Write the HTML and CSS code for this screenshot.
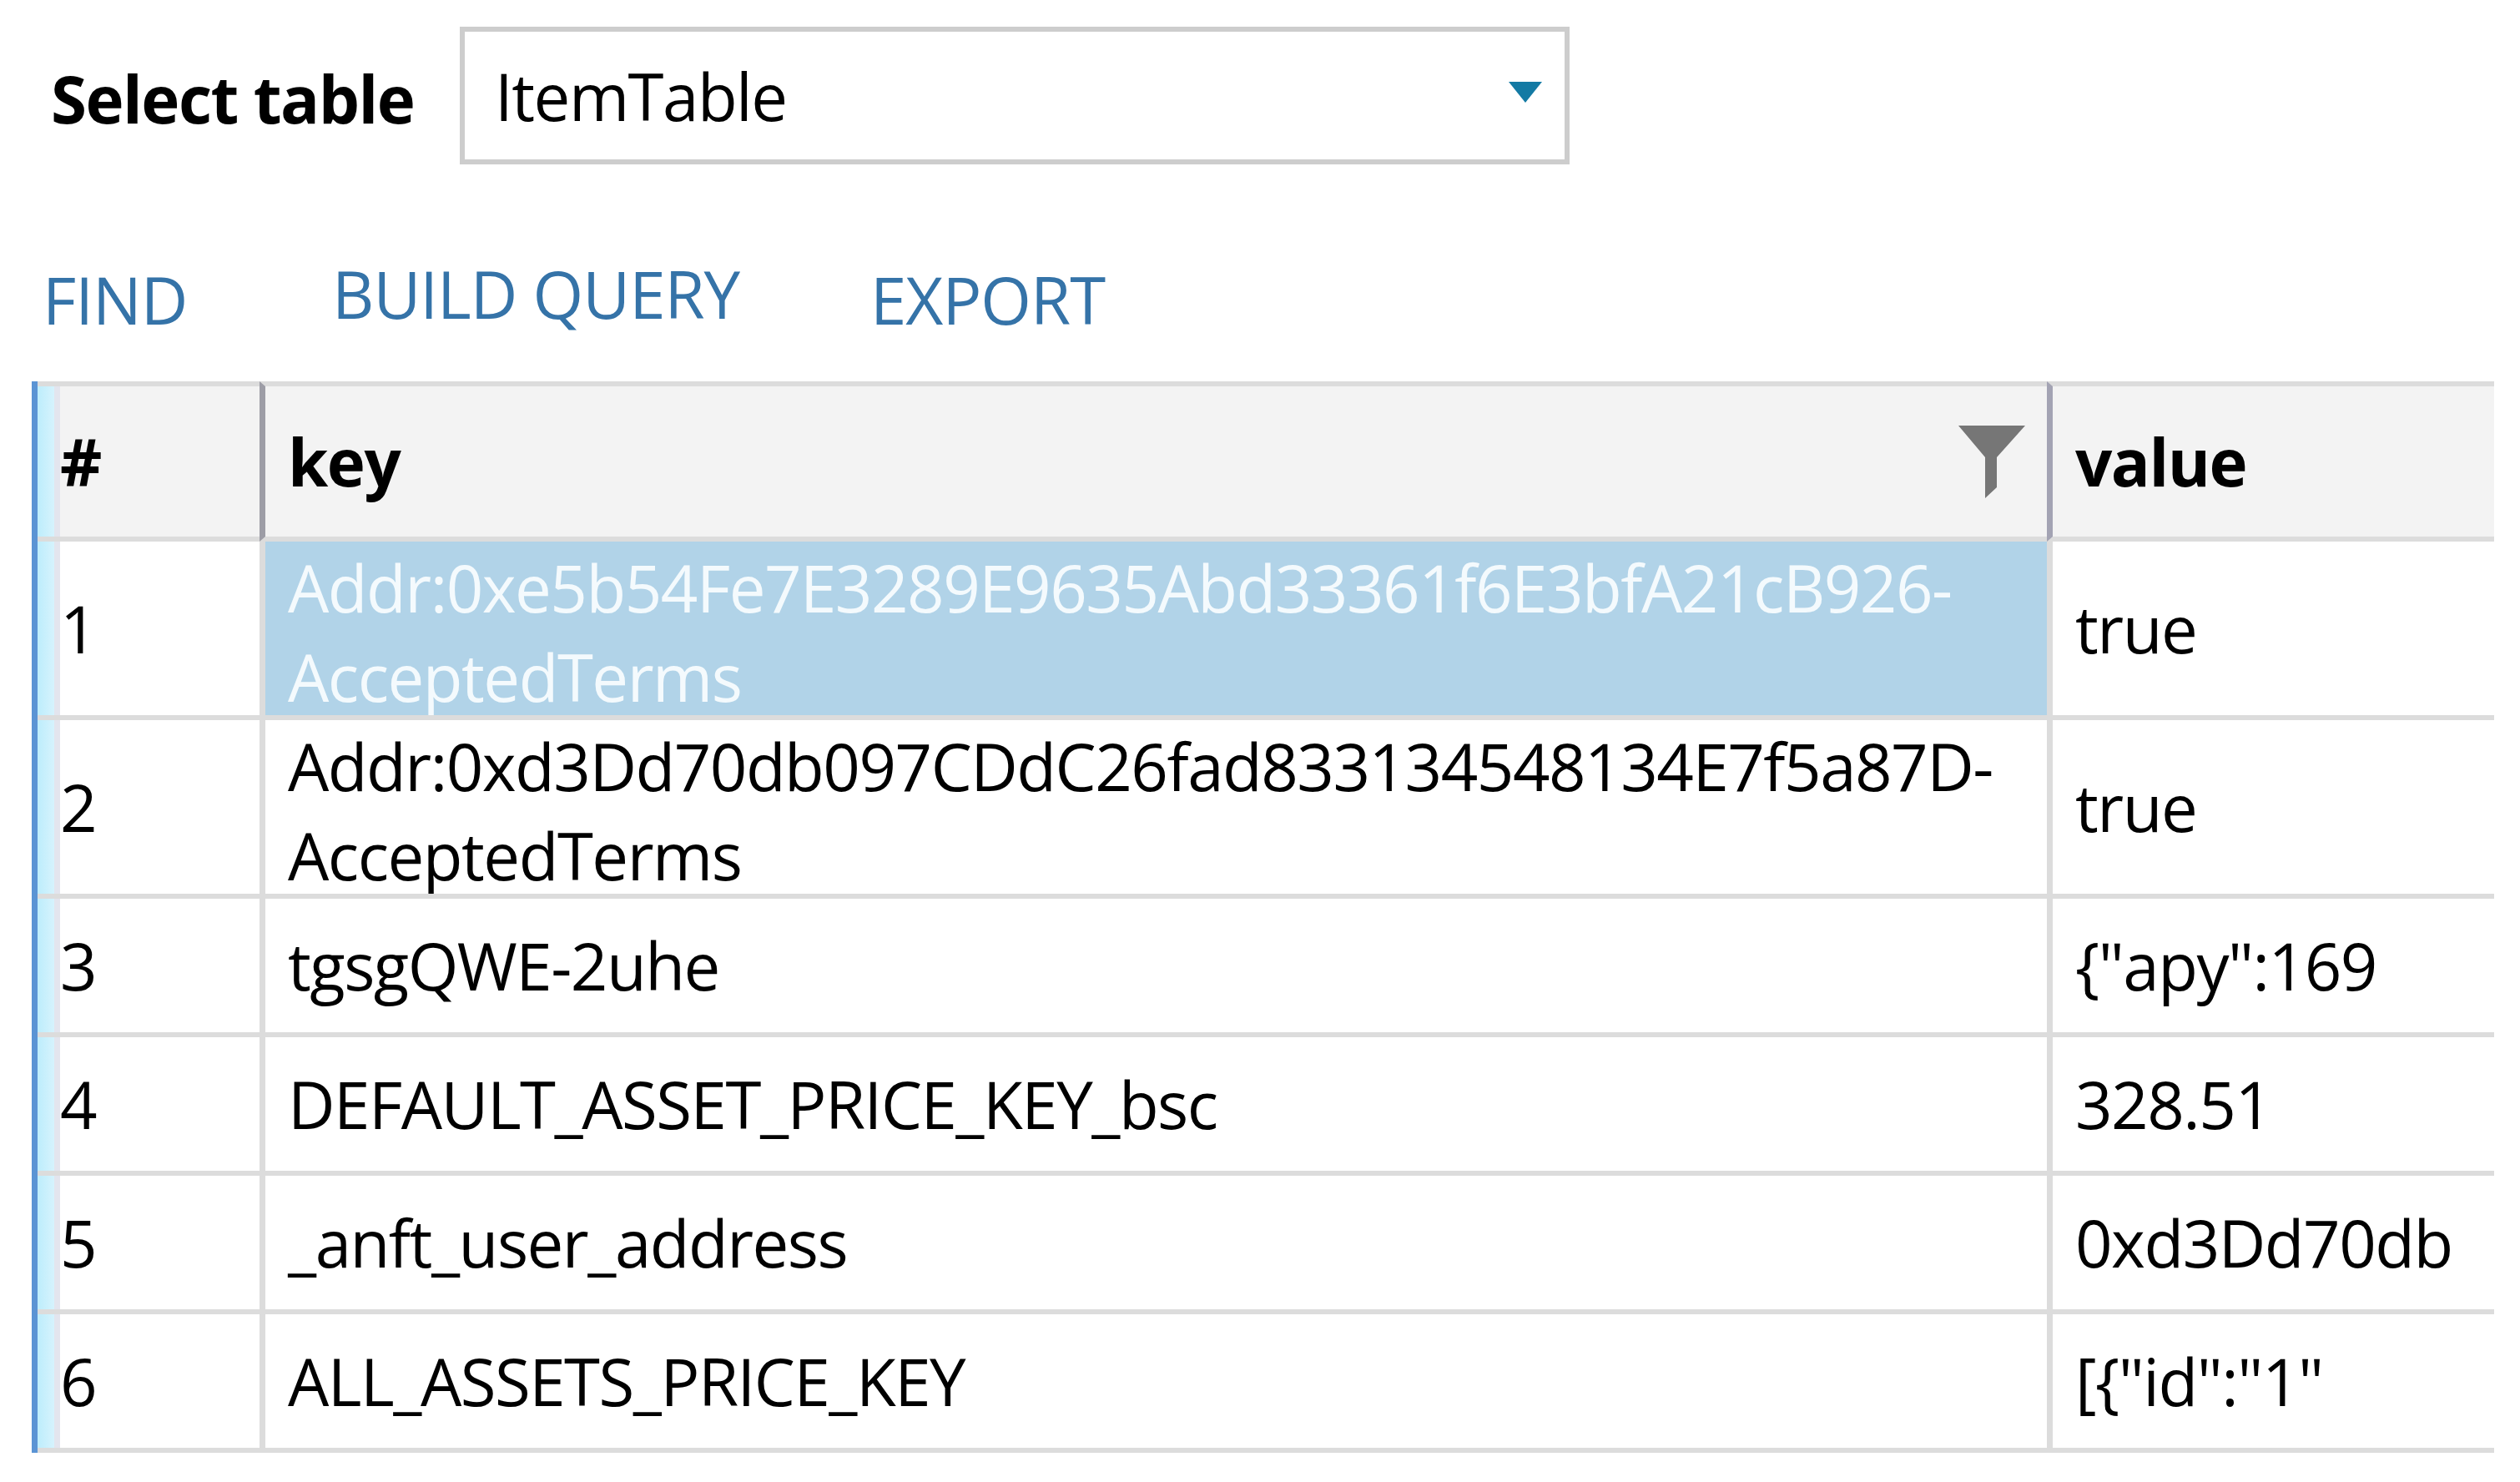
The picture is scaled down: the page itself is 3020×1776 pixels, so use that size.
FILE: index.html
```html
<!DOCTYPE html>
<html lang="en">
<head>
<meta charset="utf-8">
<title>ItemTable</title>
<link rel="stylesheet" href="styles.css">
</head>
<body>
<div class="app">
  <div class="toolbar">
    <span class="label">Select table</span>
    <div class="select">
      <span class="select-value">ItemTable</span>
      <svg class="caret" width="40" height="25" viewBox="0 0 40 25"><polygon points="0,0 40,0 20,25" fill="#137aa4"/></svg>
    </div>
  </div>

  <div class="tabs">
    <span class="tab tab-find">FIND</span>
    <span class="tab tab-query">BUILD QUERY</span>
    <span class="tab tab-export">EXPORT</span>
  </div>

  <div class="grid-wrap">
    <div class="grid">
      <div class="cell stripe head"></div>
      <div class="cell num head">#</div>
      <div class="cell key head">
        <span>key</span>
        <svg class="funnel" width="80" height="87" viewBox="0 0 80 87"><polygon points="0,0 80,0 46,38 46,74 32,87 32,38" fill="#767676"/></svg>
      </div>
      <div class="cell val head">value</div>

      <div class="cell stripe"></div>
      <div class="cell num">1</div>
      <div class="cell key selected"><span class="wrap">Addr:0xe5b54Fe7E3289E9635Abd33361f6E3bfA21cB926-AcceptedTerms</span></div>
      <div class="cell val">true</div>

      <div class="cell stripe"></div>
      <div class="cell num">2</div>
      <div class="cell key"><span class="wrap">Addr:0xd3Dd70db097CDdC26fad833134548134E7f5a87D-AcceptedTerms</span></div>
      <div class="cell val">true</div>

      <div class="cell stripe"></div>
      <div class="cell num">3</div>
      <div class="cell key">tgsgQWE-2uhe</div>
      <div class="cell val">{"apy":169</div>

      <div class="cell stripe"></div>
      <div class="cell num">4</div>
      <div class="cell key">DEFAULT_ASSET_PRICE_KEY_bsc</div>
      <div class="cell val">328.51</div>

      <div class="cell stripe"></div>
      <div class="cell num">5</div>
      <div class="cell key">_anft_user_address</div>
      <div class="cell val">0xd3Dd70db</div>

      <div class="cell stripe"></div>
      <div class="cell num">6</div>
      <div class="cell key">ALL_ASSETS_PRICE_KEY</div>
      <div class="cell val">[{"id":"1"</div>
    </div>
  </div>
</div>
</body>
</html>
```

FILE: styles.css
```css
html, body {
  margin: 0;
  padding: 0;
  background: #ffffff;
}

body {
  width: 3020px;
  height: 1776px;
  overflow: hidden;
  font-family: "Open Sans", "Noto Sans", "DejaVu Sans", sans-serif;
  font-size: 78px;
  letter-spacing: -1.5px;
  line-height: 104px;
  color: #000000;
}

.app {
  display: flex;
  flex-direction: column;
}

/* ---------- top toolbar ---------- */
.toolbar {
  display: flex;
  align-items: center;
  padding: 32px 0 0 61px;
  height: 165px;
}

.label {
  flex: 0 0 490px;
  font-weight: 700;
  margin-top: 6px;
}

.select {
  box-sizing: border-box;
  width: 1330px;
  height: 165px;
  border: 6px solid #cdcdcd;
  display: flex;
  align-items: center;
  justify-content: space-between;
  padding: 0 27px 0 36px;
}

.caret {
  margin-bottom: 8px;
}

/* ---------- tabs ---------- */
.tabs {
  display: grid;
  grid-template-columns: 347px 645px auto;
  align-items: start;
  height: 110px;
  margin-top: 101px;
  padding-left: 51px;
  color: #3573a8;
}

.tab {
  margin-top: 9px;
  letter-spacing: -1px;
}

.tab-query {
  margin-top: 2px;
}

/* ---------- data grid ---------- */
.grid-wrap {
  margin: 49px 0 0 38px;
  border-left: 7px solid #5b94d4;
  width: 2944px;
}

.grid {
  display: grid;
  grid-template-columns: 27px 239px 2142px 536px;
}

.cell {
  display: flex;
  align-items: center;
  min-height: 160px;
  border-bottom: 6px solid #dcdcdc;
  white-space: nowrap;
  overflow: hidden;
}

.cell.head {
  min-height: 180px;
  border-top: 6px solid #dcdcdc;
  background: #f3f3f3;
  font-weight: 700;
}

.stripe,
.cell.stripe.head {
  background: linear-gradient(to right, #bdedfc 0, #d6f3fd 20px, #e3e5ee 20px, #e3e5ee 27px);
}

.num {
  padding-left: 0;
}

.key {
  border-left: 7px solid #dcdcdc;
  padding-left: 27px;
}

.key.head {
  justify-content: space-between;
  padding-right: 26px;
  border-left-color: #9d9da6;
}

.val {
  border-left: 7px solid #dcdcdc;
  padding-left: 27px;
}

.val.head {
  border-left-color: #a3a3b3;
}

.wrap {
  white-space: normal;
  line-height: 107px;
  margin: 2px 0 -8px;
}

.key.selected {
  background: #b1d3e8;
  color: #f4fafd;
}
```
